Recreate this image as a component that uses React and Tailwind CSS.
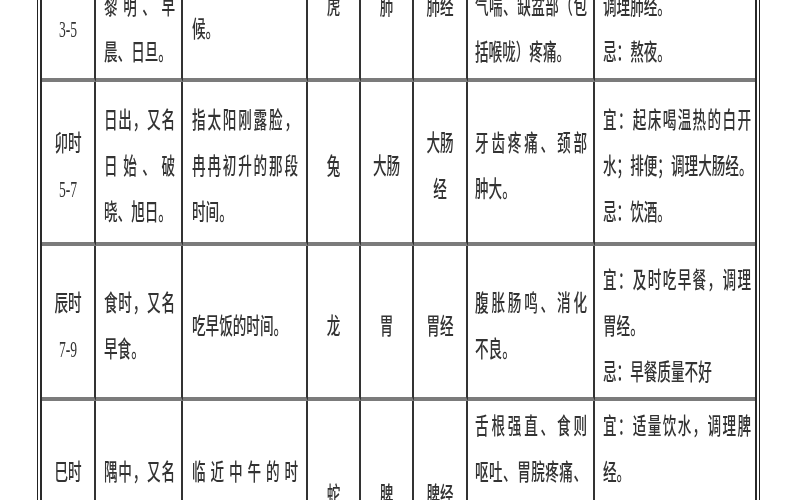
import clsx from "clsx";

// column padding / alignment, left to right
const colClass = [
  "text-center",
  "pl-[8px] pr-[6px]",
  "pl-[9px] pr-[8px]",
  "text-center",
  "text-center",
  "text-center",
  "pl-[7px] pr-[6px]",
  "pl-[8px] pr-[4px]",
];

// [text, justified?]
const rows = [
  {
    h: "h-[156px]",
    cells: [
      [["寅时"], ["3-5"]],
      [["平旦，又名", 1], ["黎明、早", 1], ["晨、日旦。"]],
      [["夜与日交替的时", 1], ["候。"]],
      [["虎"]],
      [["肺"]],
      [["肺经"]],
      [["咳嗽、胸部胀满、", 1], ["气喘、缺盆部（包", 1], ["括喉咙）疼痛。"]],
      [["宜：熟睡，养好肺气，", 1], ["调理肺经。"], ["忌：熬夜。"]],
    ],
  },
  {
    h: "h-[164px]",
    cells: [
      [["卯时"], ["5-7"]],
      [["日出，又名", 1], ["日始、破", 1], ["晓、旭日。"]],
      [["指太阳刚露脸，", 1], ["冉冉初升的那段", 1], ["时间。"]],
      [["兔"]],
      [["大肠"]],
      [["大肠"], ["经"]],
      [["牙齿疼痛、颈部", 1], ["肿大。"]],
      [["宜：起床喝温热的白开", 1], ["水；排便；调理大肠经。"], ["忌：饮酒。"]],
    ],
  },
  {
    h: "h-[155px]",
    cells: [
      [["辰时"], ["7-9"]],
      [["食时，又名", 1], ["早食。"]],
      [["吃早饭的时间。"]],
      [["龙"]],
      [["胃"]],
      [["胃经"]],
      [["腹胀肠鸣、消化", 1], ["不良。"]],
      [["宜：及时吃早餐，调理", 1], ["胃经。"], ["忌：早餐质量不好"]],
    ],
  },
  {
    h: "h-[184px]",
    cells: [
      [["巳时"], ["9-11"]],
      [["隅中，又名", 1], ["日禺。"]],
      [["临近中午的时", 1], ["候。"]],
      [["蛇"]],
      [["脾"]],
      [["脾经"]],
      [["舌根强直、食则", 1], ["呕吐、胃脘疼痛、", 1], ["腹胀、嗳气、全身", 1], ["疲乏。"]],
      [["宜：适量饮水，调理脾", 1], ["经。"], ["忌：思虑过度，暴饮", 1], ["暴食。"]],
    ],
  },
];

function Line({ text, justify }) {
  // glyphs in the scan are stretched vertically
  return (
    <div
      className={clsx(
        "h-[46px] leading-[46px] whitespace-nowrap scale-y-[1.65]",
        justify && "[text-align-last:justify]"
      )}
    >
      {text}
    </div>
  );
}

export default function App() {
  return (
    <div className="h-[500px] w-[800px] overflow-hidden bg-white flex flex-col">
      <div
        className="-mt-[74px] ml-[37px] w-[723px] border-x border-[#222] px-[2px] blur-[0.35px]"
        style={{ fontFamily: '"Liberation Serif", "Noto Sans CJK SC", serif' }}
      >
        <div className="border-x-2 border-[#2a2a2a] grid grid-cols-[54px_87px_125px_53px_53px_54px_127px_160px] text-[13.6px] font-medium text-[#333]">
          {rows.map((row, r) =>
            row.cells.map((lines, c) => (
              <div
                key={r + "-" + c}
                className={clsx(
                  "flex flex-col justify-center overflow-hidden pt-[10px] border-b-4 border-b-[#7b7b7b]",
                  row.h,
                  colClass[c],
                  c < 7 && "border-r-2 border-r-[#333]"
                )}
              >
                {lines.map(([text, j], i) => (
                  <Line key={i} text={text} justify={j} />
                ))}
              </div>
            ))
          )}
        </div>
      </div>
    </div>
  );
}
